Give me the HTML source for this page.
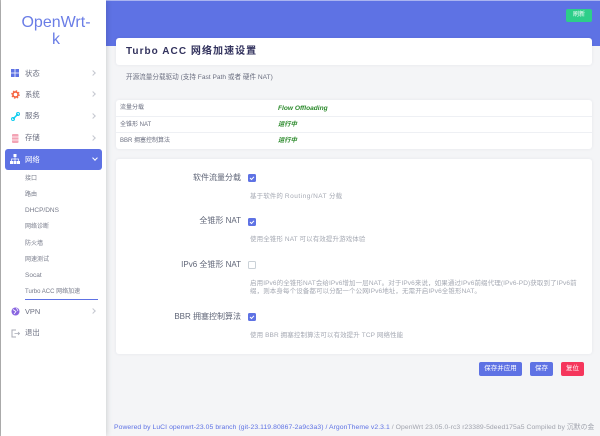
<!DOCTYPE html>
<html><head><meta charset="utf-8">
<style>
*{box-sizing:border-box;margin:0;padding:0}
html,body{width:600px;height:436px;overflow:hidden;background:#f4f5f7;font-family:"Liberation Sans","Noto Sans CJK SC",sans-serif;color:#525f7f}
.a{position:absolute;white-space:nowrap}
.t{transform:translateY(-50%);line-height:10px}
#hdr{left:0;top:0;width:600px;height:46px;background:#5e72e4;border-top:1px solid #aab4f0}
#side{left:1px;top:0;width:105px;height:436px;background:#fff;box-shadow:0 0 6px rgba(0,0,0,.2)}
.card{background:#fff;border-radius:3px;left:116px;width:476px;box-shadow:0 0 3px rgba(50,50,93,.08)}
.m{font-size:7.4px;left:25px;color:#6b6f80}
.s{font-size:6px;left:25px;color:#777b8a}
.chev{width:4px;height:4px;border-top:1px solid #c5c8d0;border-right:1px solid #c5c8d0;transform:rotate(45deg);left:91px}
.l{font-size:8px;color:#5f6577;right:359px}
.d{font-size:6.5px;color:#a5a9b3;left:250px;letter-spacing:.1px}
.c{left:248px;width:8px;height:8px;border-radius:1.5px;background:#5e72e4}
.c svg{display:block}
.b{top:362px;height:14px;border-radius:2px;color:#fff;font-size:6.5px;line-height:14px;text-align:center;background:#5e72e4}
.r{font-size:6px;left:120px;color:#6b6f80}
.v{font-weight:bold;font-style:italic;color:#2b8a2b;left:278px}
</style></head><body>
<div class="a" id="hdr"></div>
<div class="a" style="left:0;top:0;width:1px;height:436px;background:#bbb"></div>
<div class="a" id="side"></div>

<div class="a" style="left:3px;width:106px;top:14px;text-align:center;font-size:16px;line-height:17px;color:#6a7de6;white-space:normal">OpenWrt-<br>k</div>

<svg class="a" style="left:11px;top:69px" width="8" height="8"><rect width="3.600" height="3.600" fill="#5e72e4"/><rect x="4.400" width="3.600" height="3.600" fill="#5e72e4"/><rect y="4.400" width="3.600" height="3.600" fill="#5e72e4"/><rect x="4.400" y="4.400" width="3.600" height="3.600" fill="#5e72e4"/></svg>
<div class="a t m" style="top:73.500px">状态</div><div class="a chev" style="top:71px"></div>
<svg class="a" style="left:11px;top:90px" width="9" height="9"><circle cx="4.500" cy="4.500" r="2.600" fill="none" stroke="#f5603c" stroke-width="1.600"/><circle cx="4.500" cy="4.500" r="3.800" fill="none" stroke="#f5603c" stroke-width="1" stroke-dasharray="1.500 1.500"/></svg>
<div class="a t m" style="top:94.500px">系统</div><div class="a chev" style="top:92px"></div>
<svg class="a" style="left:11px;top:112px" width="9" height="9"><path d="M2 7L7 2" stroke="#11cdef" stroke-width="1.500"/><circle cx="2" cy="7" r="1.500" fill="none" stroke="#11cdef"/><circle cx="7" cy="2" r="1.500" fill="none" stroke="#11cdef"/></svg>
<div class="a t m" style="top:116px">服务</div><div class="a chev" style="top:114px"></div>
<svg class="a" style="left:11px;top:134px" width="8" height="9"><rect x="1" width="6.500" height="9" rx="1" fill="#f3a4b5"/><path d="M1 3H7.500M1 6H7.500" stroke="#fff" stroke-width=".7"/></svg>
<div class="a t m" style="top:138px">存储</div><div class="a chev" style="top:136px"></div>

<div class="a" style="left:4.500px;top:148.500px;width:97px;height:21px;background:#5e72e4;border-radius:3px"></div>
<svg class="a" style="left:10px;top:154px" width="10" height="10"><rect x="3.500" y="0" width="3" height="3" fill="#fff"/><rect x="0" y="7" width="3" height="3" fill="#fff"/><rect x="3.500" y="7" width="3" height="3" fill="#fff"/><rect x="7" y="7" width="3" height="3" fill="#fff"/><path d="M5 3V7M1.500 7V5H8.500V7" stroke="#fff" fill="none" stroke-width=".7"/></svg>
<div class="a t m" style="top:159.500px;color:#fff">网络</div>
<div class="a" style="left:92.500px;top:156px;width:4px;height:4px;border-right:1.500px solid #fff;border-bottom:1.500px solid #fff;transform:rotate(45deg)"></div>

<div class="a t s" style="top:178.500px">接口</div>
<div class="a t s" style="top:194.500px">路由</div>
<div class="a t s" style="top:210.500px;font-size:6.500px">DHCP/DNS</div>
<div class="a t s" style="top:227px">网络诊断</div>
<div class="a t s" style="top:243.500px">防火墙</div>
<div class="a t s" style="top:259.500px">网速测试</div>
<div class="a t s" style="top:275.500px;font-size:6.500px">Socat</div>
<div class="a t s" style="top:292px">Turbo ACC 网络加速</div>
<div class="a" style="left:25px;top:299px;width:73px;height:1px;background:#5e72e4"></div>

<svg class="a" style="left:11px;top:307px" width="9" height="9"><circle cx="4.500" cy="4.500" r="4" fill="#8965e0"/><path d="M2 2.500L5 4.500L3 7M5.500 1L7 4" stroke="#fff" fill="none" stroke-width=".8"/></svg>
<div class="a t m" style="top:311.500px">VPN</div><div class="a chev" style="top:309px"></div>
<svg class="a" style="left:11px;top:329px" width="9" height="9"><path d="M5 1H1V8H5" fill="none" stroke="#a8abb5"/><path d="M3.500 4.500H8.500M7 3L8.500 4.500L7 6" fill="none" stroke="#a8abb5" stroke-width=".8"/></svg>
<div class="a t m" style="top:333px">退出</div>

<div class="a" style="left:566px;top:9px;width:26px;height:12.500px;background:#2dce89;border-radius:2px;color:#fff;font-size:6px;line-height:12px;text-align:center">刷新</div>

<div class="a card" style="top:38px;height:27px"></div>
<div class="a t" style="left:126px;top:52px;font-size:10px;font-weight:bold;letter-spacing:1.05px;color:#32325d">Turbo ACC 网络加速设置</div>
<div class="a t" style="left:126px;top:78px;font-size:6.600px;color:#6b6f80">开源流量分载驱动 (支持 Fast Path 或者 硬件 NAT)</div>

<div class="a card" style="top:100px;height:49px"></div>
<div class="a" style="left:116px;top:116px;width:476px;height:1px;background:#eef0f4"></div>
<div class="a" style="left:116px;top:132px;width:476px;height:1px;background:#eef0f4"></div>
<div class="a t r" style="top:108px">流量分载</div>
<div class="a t v" style="top:108.500px;font-size:6.600px">Flow Offloading</div>
<div class="a t r" style="top:125px">全锥形 NAT</div>
<div class="a t v" style="top:125px;font-size:6.300px">运行中</div>
<div class="a t r" style="top:141px">BBR 拥塞控制算法</div>
<div class="a t v" style="top:141px;font-size:6.300px">运行中</div>

<div class="a card" style="top:159px;height:195px"></div>

<div class="a t l" style="top:177.500px">软件流量分载</div>
<div class="a c" style="top:174px"><svg width="8" height="8"><path d="M2 4L3.500 5.500L6 2.800" stroke="#fff" fill="none" stroke-width="1"/></svg></div>
<div class="a t d" style="top:196.500px">基于软件的 <span style="letter-spacing:.5px">Routing/NAT</span> 分载</div>

<div class="a t l" style="top:221px">全锥形 NAT</div>
<div class="a c" style="top:217.500px"><svg width="8" height="8"><path d="M2 4L3.500 5.500L6 2.800" stroke="#fff" fill="none" stroke-width="1"/></svg></div>
<div class="a t d" style="top:240px">使用全锥形 NAT 可以有效提升游戏体验</div>

<div class="a t l" style="top:264.500px">IPv6 全锥形 NAT</div>
<div class="a c" style="top:261px;background:#fff;border:1px solid #cad1d7"></div>
<div class="a t d" style="top:284px">启用IPv6的全锥形NAT会给IPv6增加一层NAT。对于IPv6来说，如果通过IPv6前缀代理(IPv6-PD)获取到了IPv6前</div>
<div class="a t d" style="top:292px">缀，则本身每个设备都可以分配一个公网IPv6地址，无需开启IPv6全锥形NAT。</div>

<div class="a t l" style="top:316.500px">BBR 拥塞控制算法</div>
<div class="a c" style="top:313px"><svg width="8" height="8"><path d="M2 4L3.500 5.500L6 2.800" stroke="#fff" fill="none" stroke-width="1"/></svg></div>
<div class="a t d" style="top:336px">使用 BBR 拥塞控制算法可以有效提升 TCP 网络性能</div>

<div class="a b" style="left:479px;width:43px">保存并应用</div>
<div class="a b" style="left:530px;width:23px">保存</div>
<div class="a b" style="left:561px;width:23px;background:#f5365c">复位</div>

<div class="a t" style="left:114px;top:427.500px;font-size:6.800px;letter-spacing:.065px;color:#a0a3ad"><span style="color:#5e72e4">Powered by LuCI openwrt-23.05 branch (git-23.119.80867-2a9c3a3) / ArgonTheme v2.3.1</span> / OpenWrt 23.05.0-rc3 r23389-5deed175a5 Compiled by 沉默の金</div>
</body></html>
